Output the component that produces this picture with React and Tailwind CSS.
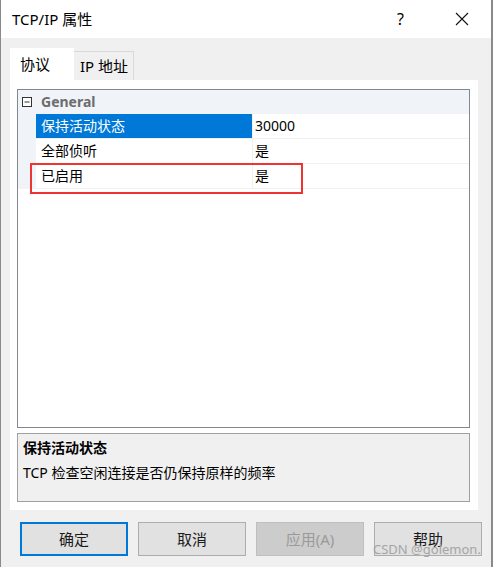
import React from 'react';

// 属性表格的行
const filas = [
  { nombre: '保持活动状态', valor: '30000', sel: true },
  { nombre: '全部侦听', valor: '是' },
  { nombre: '已启用', valor: '是' },
];

const fuente = { fontFamily: '"Segoe UI", "Noto Sans", "Noto Sans CJK SC", sans-serif' };

function Boton({ texto, primario, deshabilitado }) {
  const base = 'w-[108px] h-[34px] flex items-center justify-center text-[15px] leading-none';
  if (deshabilitado) {
    return <div className={`${base} bg-[#cccccc] border border-[#bfbfbf] text-[#9a9a9a]`}>{texto}</div>;
  }
  if (primario) {
    return <div className={`${base} bg-[#e1e1e1] border-2 border-[#0078d7] text-[#1a1a1a]`}>{texto}</div>;
  }
  return <div className={`${base} bg-[#e1e1e1] border border-[#adadad] text-[#1a1a1a]`}>{texto}</div>;
}

export default function App() {
  return (
    <div style={fuente} className="w-[493px] h-[567px] flex flex-col bg-[#f0f0f0] border-l border-r-2 border-[#8a8a8a] overflow-hidden relative">
      {/* Barra de título */}
      <div className="h-[38px] bg-white flex items-center pl-[11px] shrink-0">
        <span className="text-[15px] leading-none text-black flex-1">TCP/IP 属性</span>
        <span className="text-[16px] leading-none text-black w-[20px] mr-[38px]">?</span>
        <svg width="14" height="14" viewBox="0 0 14 14" className="mr-[22px]">
          <path d="M1 1 L13 13 M13 1 L1 13" stroke="#111" strokeWidth="1.1" />
        </svg>
      </div>

      {/* Pestañas */}
      <div className="flex items-end h-[42px] pl-[9px] shrink-0">
        <div className="w-[64px] h-[32px] bg-white flex items-center pl-[10px] text-[15px] leading-none text-black">协议</div>
        <div className="w-[60px] h-[29px] bg-[#f0f0f0] border-t border-r border-[#d9d9d9] flex items-center pl-[6px] text-[15px] leading-none text-black">IP 地址</div>
      </div>

      {/* Panel */}
      <div className="ml-[9px] w-[468px] h-[430px] bg-white flex flex-col pt-[9px] pl-[7px] pr-[8px] pb-[8px] shrink-0">
        {/* PropertyGrid */}
        <div className="h-[339px] border border-[#828790] bg-white flex flex-col">
          <div className="flex h-[24px] bg-[#f0f4f9] items-center">
            <div className="w-[18px] flex justify-center items-center">
              <svg width="10" height="10" viewBox="0 0 10 10">
                <rect x="0.5" y="0.5" width="9" height="9" fill="white" stroke="#333" />
                <path d="M2.5 5 H7.5" stroke="#333" />
              </svg>
            </div>
            <span className="pl-[5px] text-[14px] leading-none font-bold text-[#6d6d6d]">General</span>
          </div>
          {filas.map((f) => (
            <div key={f.nombre} className="flex h-[25px]">
              <div className="w-[18px] bg-[#f0f4f9]"></div>
              <div className={`w-[216px] flex items-center pl-[5px] text-[14px] leading-none border-b border-[#f0f0f0] ${f.sel ? 'bg-[#0078d7] text-white' : 'text-black'}`}>
                {f.nombre}
              </div>
              <div className="flex-1 flex items-center pl-[2px] text-[14px] leading-none text-black border-b border-l border-[#f0f0f0]">
                {f.valor}
              </div>
            </div>
          ))}
        </div>

        {/* Descripción */}
        <div className="mt-[5px] h-[69px] border border-[#a0a0a0] bg-[#f0f0f0] px-[5px] pt-[7px]">
          <div className="text-[14px] leading-none font-bold text-black">保持活动状态</div>
          <div className="mt-[11px] text-[14px] leading-none text-black">TCP 检查空闲连接是否仍保持原样的频率</div>
        </div>
      </div>

      {/* Botones */}
      <div className="flex pl-[19px] mt-[12px] gap-[10px]">
        <Boton texto="确定" primario />
        <Boton texto="取消" />
        <Boton texto="应用(A)" deshabilitado />
        <Boton texto="帮助" />
      </div>

      {/* Recuadro rojo sobre la fila 已启用 */}
      <div className="absolute left-[29px] top-[163px] w-[273px] h-[31px] border-2 border-[#ee3333]"></div>

      {/* Marca de agua */}
      <div className="absolute left-[372px] top-[543px] whitespace-nowrap text-[13px] leading-none text-[#a5a5a5]">CSDN @golemon.</div>
    </div>
  );
}
